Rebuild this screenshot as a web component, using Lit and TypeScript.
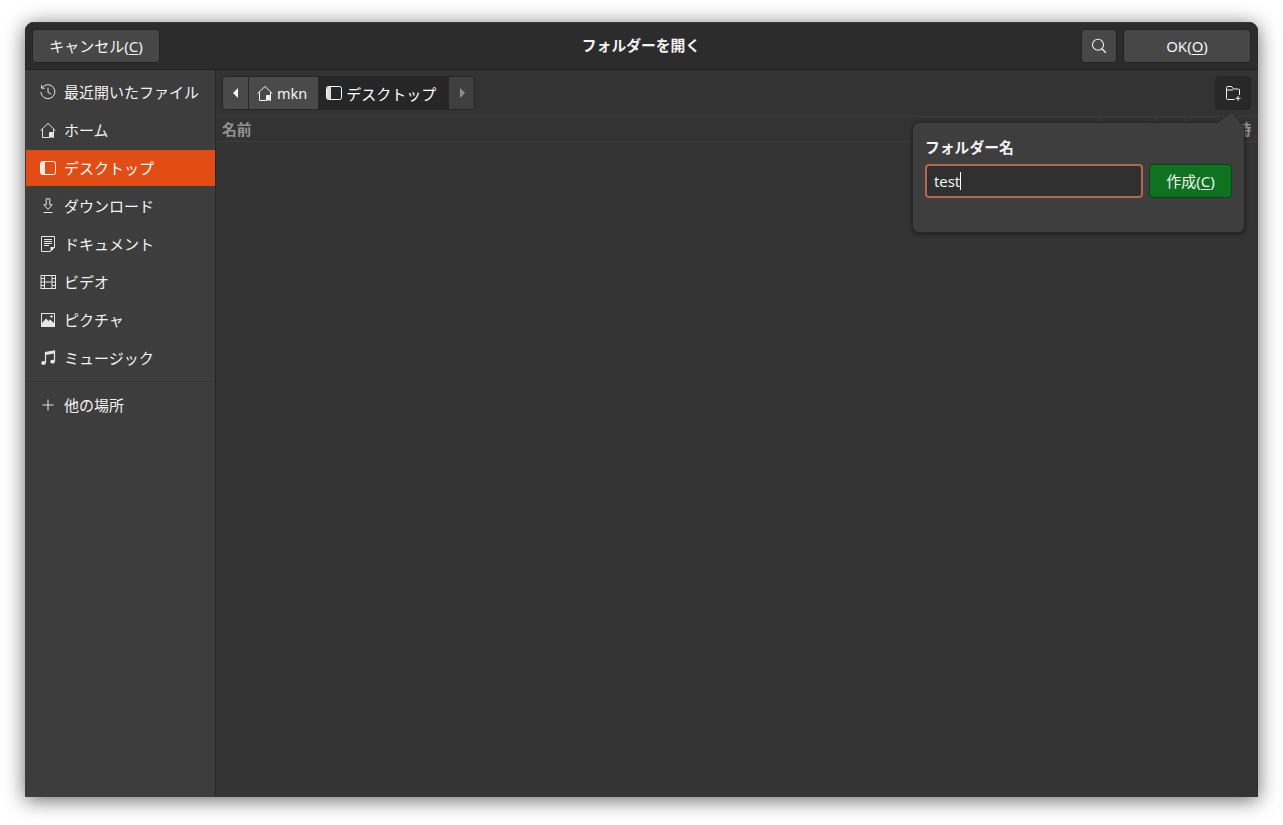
import { LitElement, html, css, svg } from "lit";
import { customElement } from "lit/decorators.js";

const ic = (body: unknown) => html`<svg class="ic" viewBox="0 0 16 16" width="16" height="16" fill="none" stroke="currentColor" stroke-width="1">${body}</svg>`;
const home = svg`<path d="M.6 8.6 8 1.400l7.400 7.200M2.500 7.200v8.300h7V10.500h3.400v5h.6V7.200" /><path d="M10 11h2.800v4.600H10z" fill="currentColor" stroke="none"/>`;
const desk = svg`<rect x=".5" y="1.500" width="15" height="13" rx="2"/><path d="M2.500 2h2.500v12H2.500A1.500 1.500 0 0 1 1 12.500v-9A1.500 1.500 0 0 1 2.500 2z" fill="currentColor" fill-opacity=".85" stroke="none"/>`;
const icons: Record<string, unknown> = {
  recent: svg`<path d="M2.200 3.600A7 7 0 1 1 .9 8" /><path d="M1.600 1v3.200h3.200" /><path d="M8 3.600v4.800l3.200 1.800" />`,
  home,
  desk,
  down: svg`<path d="M6.200 .8h3.600v6h2.400L8 11.400 3.800 6.800h2.400zM3.500 14.500h9" />`,
  doc: svg`<path d="M1.500 .5h13v11l-4 4h-9z" /><path d="M4 3.500h8M4 5.500h8M4 7.500h8M4 9.500h5" /><path d="M10.500 15.500v-4.500h4.500z" fill="currentColor" stroke="none"/>`,
  video: svg`<rect x="1" y="1.500" width="14.500" height="13"/><path d="M4.500 1.500v13M12 1.500v13M4.500 8h7.500M1 4.500h3.500M1 8h3.500M1 11.500h3.500M12 4.500h3.500M12 8h3.500M12 11.500h3.500"/>`,
  pic: svg`<rect x="1.500" y="1.500" width="13" height="13"/><path d="M2 11 6 6.500l2.500 2.500L10 7.500l4 3.500v3.500H2z" fill="currentColor" stroke="none"/><circle cx="11.500" cy="4.500" r="1.200" fill="currentColor" stroke="none"/>`,
  music: svg`<path d="M5.500 13V2.500l9-1.500V11.500" stroke-width="1.200"/><path d="M5.500 2.500l9-1.500v2.500l-9 1.500z" fill="currentColor" stroke="none"/><ellipse cx="3.500" cy="13" rx="2.300" ry="1.900" fill="currentColor" stroke="none"/><ellipse cx="12.500" cy="11.700" rx="2.300" ry="1.900" fill="currentColor" stroke="none"/>`,
  plus: svg`<path d="M8 2.500v11M2.500 8h11" />`,
  search: svg`<circle cx="7" cy="6.800" r="5.500" stroke-width="1.100"/><path d="M10.800 10.800 14.800 14.800" stroke-width="1.400"/>`,
  newf: svg`<path d="M9.500 14.500H2.500a1 1 0 0 1-1-1V2.500a1 1 0 0 1 1-1h4L8.500 4h5a1 1 0 0 1 1 1v5M1.500 5h6.500" /><path d="M13 10.800v5M10.500 13.300h5" />`,
};

const places = [
  ["recent", "最近開いたファイル"],
  ["home", "ホーム"],
  ["desk", "デスクトップ"],
  ["down", "ダウンロード"],
  ["doc", "ドキュメント"],
  ["video", "ビデオ"],
  ["pic", "ピクチャ"],
  ["music", "ミュージック"],
];

@customElement("app-root")
export class AppRoot extends LitElement {
  static styles = css`
    :host {
      display: block;
      height: 825px;
      box-sizing: border-box;
      padding: 22px 25px 28px;
      background: #fff;
      font-family: "Noto Sans", "Noto Sans CJK JP", sans-serif;
      font-size: 15px;
      color: #f3f3f3;
      overflow: hidden;
    }
    .window {
      height: 775px;
      display: grid;
      grid-template-rows: 48px 1fr;
      border-radius: 9px 9px 0 0;
      overflow: hidden;
      box-shadow: 0 3px 20px rgba(0, 0, 0, 0.6);
      background: #333;
      position: relative;
    }
    .ic { flex: none; display: block; }
    header {
      display: grid;
      grid-template-columns: 1fr auto 1fr;
      align-items: center;
      padding: 0 7px;
      background: #2c2c2c;
      border-bottom: 1px solid #1f1f1f;
      border-top: 1px solid #3a3a3a;
      box-sizing: border-box;
    }
    .hl, .hr { display: flex; gap: 6px; }
    .hr { justify-content: flex-end; }
    .btn {
      height: 34px;
      box-sizing: border-box;
      border-radius: 4px;
      border: 1px solid #242424;
      background: #474747;
      display: flex;
      align-items: center;
      justify-content: center;
      color: #f3f3f3;
      line-height: 1;
    }
    .cancel { width: 128px; }
    .title { text-align: center; font-weight: 700; font-size: 14.8px; line-height: 20px; margin: -2px 1px 0 0; }
    .search { width: 36px; color: #eee; }
    .ok { width: 128px; }
    .body { display: grid; grid-template-columns: 191px 1fr; min-height: 0; }
    aside {
      background: #3d3d3d;
      border-right: 1px solid #272727;
      padding-top: 4px;
      width: 190px;
    }
    .row {
      height: 36px;
      margin-bottom: 2px;
      display: flex;
      align-items: center;
      gap: 8px;
      padding-left: 14px;
      color: #f3f3f3;
      margin-left: 1px;
    }
    .row span { margin-top: -2px; }
    .row .ic { color: #e6e6e6; }
    .row.sel { background: #e24d15; color: #fff; }
    .row.sel .ic { color: #fff; }
    .sep { height: 1px; background: #353535; margin: 5px 0; }
    main { display: flex; flex-direction: column; min-width: 0; background: #333; position: relative; }
    .tools {
      height: 46px;
      box-sizing: border-box;
      padding: 6px 7px 0 6px;
      display: flex;
      justify-content: space-between;
      align-items: flex-start;
    }
    .path {
      height: 34px;
      box-sizing: border-box;
      display: flex;
      border: 1px solid #262626;
      border-radius: 4px;
      overflow: hidden;
      background: #474747;
    }
    .arr { width: 25px; display: flex; align-items: center; justify-content: center; }
    .arr.l { background: #4a4a4a; border-right: 1px solid #262626; }
    .arr.r { background: #3f3f3f; }
    .seg { display: flex; align-items: center; gap: 4px; padding: 0 11px 0 8px; }
    .seg.a { background: #4a4a4a; font-size: 14.5px; }
    .seg.b { background: #262626; color: #fff; padding-right: 13px; }
    .new {
      width: 36px;
      height: 34px;
      box-sizing: border-box;
      border-radius: 4px;
      background: #282828;
      border: 1px solid #262626;
      display: flex;
      align-items: center;
      justify-content: center;
    }
    .cols {
      height: 26px;
      box-sizing: border-box;
      display: grid;
      grid-template-columns: 883px 57px 30px 1fr;
      border-top: 1px solid #3d3d3d;
      border-bottom: 1px solid #3d3d3d;
      color: #939393;
      font-weight: 700;
      font-size: 14.8px;
      line-height: 24px;
    }
    .cols div { padding-left: 6px; white-space: nowrap; overflow: hidden; border-right: 1px solid #3d3d3d; }
    .cols .kind { padding-left: 0; font-size: 13px; }
    .cols div:last-child { border-right: none; text-align: right; padding-right: 7px; }
    .pop {
      position: absolute;
      left: 696px;
      top: 52px;
      width: 333px;
      height: 111px;
      box-sizing: border-box;
      background: #3e3e3e;
      border: 1px solid #272727;
      border-radius: 7px;
      padding: 13px 12px 12px;
      box-shadow: 0 1px 4px rgba(0, 0, 0, 0.45);
    }
    .tip { position: absolute; left: 303px; top: -12px; display: block; }
    .pop h4 { margin: 0 0 6px; font-size: 14.8px; font-weight: 700; line-height: 22px; color: #f5f5f5; }
    .form { display: flex; gap: 6px; }
    .entry {
      width: 218px;
      height: 34px;
      box-sizing: border-box;
      border: 2px solid #b5684e;
      border-radius: 4px;
      background: #303030;
      display: flex;
      align-items: center;
      padding-left: 7px;
      font-size: 14.8px;
    }
    .caret { width: 1px; height: 18px; background: #fff; }
    .create {
      width: 83px;
      height: 34px;
      box-sizing: border-box;
      background: #0e7220;
      border: 1px solid #0a4315;
      border-radius: 4px;
      display: flex;
      align-items: center;
      justify-content: center;
      color: #f3f3f3;
      line-height: 1;
    }
    u { text-underline-offset: 2px; }
  `;

  render() {
    return html`
      <div class="window">
        <header>
          <div class="hl"><div class="btn cancel">キャンセル(<u>C</u>)</div></div>
          <div class="title">フォルダーを開く</div>
          <div class="hr">
            <div class="btn search">${ic(icons.search)}</div>
            <div class="btn ok">OK(<u>O</u>)</div>
          </div>
        </header>
        <div class="body">
          <aside>
            ${places.map(
              ([k, t]) => html`<div class="row ${k === "desk" ? "sel" : ""}">${ic(icons[k])}<span>${t}</span></div>`
            )}
            <div class="sep"></div>
            <div class="row">${ic(icons.plus)}<span>他の場所</span></div>
          </aside>
          <main>
            <div class="tools">
              <div class="path">
                <div class="arr l"><svg width="6" height="10" viewBox="0 0 6 10"><path d="M5 0v10L0 5z" fill="#f3f3f3" /></svg></div>
                <div class="seg a">${ic(home)}<span>mkn</span></div>
                <div class="seg b">${ic(desk)}<span>デスクトップ</span></div>
                <div class="arr r"><svg width="6" height="10" viewBox="0 0 6 10"><path d="M1 0v10l5-5z" fill="#8e8e8e" /></svg></div>
              </div>
              <div class="new">${ic(icons.newf)}</div>
            </div>
            <div class="cols">
              <div>名前</div>
              <div>サイズ</div>
              <div class="kind">種類</div>
              <div>更新日時</div>
            </div>
            <div class="pop">
              <svg class="tip" width="28" height="13" viewBox="0 0 28 13">
                <path d="M0 12.500 16 .5 25 12.500z" fill="#3e3e3e" />
                <path d="M0 12 16 .5 25 12" fill="none" stroke="#272727" />
              </svg>
              <h4>フォルダー名</h4>
              <div class="form">
                <div class="entry"><span>test</span><span class="caret"></span></div>
                <div class="create">作成(<u>C</u>)</div>
              </div>
            </div>
          </main>
        </div>
      </div>
    `;
  }
}
